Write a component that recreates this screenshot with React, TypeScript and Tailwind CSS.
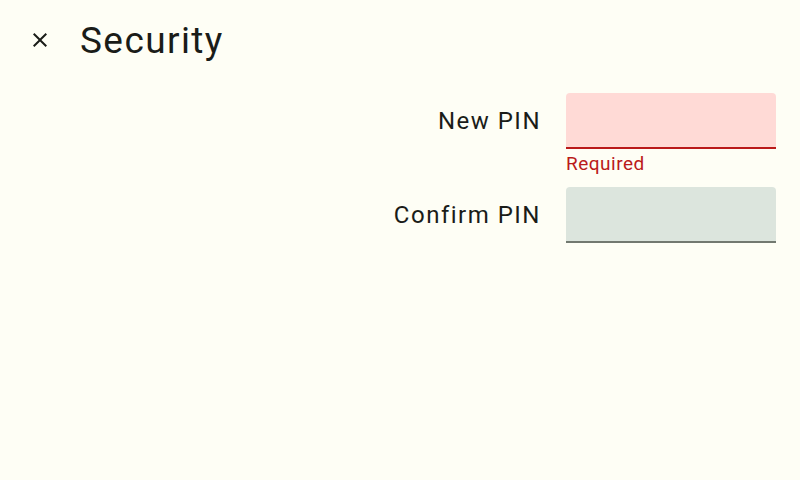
import React from "react";

function CloseIcon() {
  return (
    <svg width="24" height="24" viewBox="0 0 24 24" fill="#1a1c18">
      <path d="M19 6.41 17.59 5 12 10.59 6.41 5 5 6.41 10.59 12 5 17.59 6.41 19 12 13.41 17.59 19 19 17.59 13.41 12z" />
    </svg>
  );
}

export default function App() {
  return (
    <div
      className="w-[800px] h-[480px] bg-[#fefef5] text-[#1a1c18] flex flex-col"
      style={{ fontFamily: "Roboto, 'Noto Sans', sans-serif" }}
    >
      <header className="h-[80px] flex items-center pl-[28px]">
        <button className="w-[24px] h-[24px] flex items-center justify-center">
          <CloseIcon />
        </button>
        <h1 className="ml-[28px] text-[37px] leading-none tracking-[1.4px]">Security</h1>
      </header>

      <div className="grid grid-cols-[1fr_210px] gap-x-[25px] pr-[24px] pt-[13px]">
        <div className="flex items-center justify-end h-[56px] text-[24px] tracking-[1.5px]">New PIN</div>
        <div className="h-[56px] bg-[#ffdad6] rounded-t-[4px] border-b-2 border-[#ba1a1a]" />
        <div />
        <div className="h-[38px] pt-[3px] text-[19px] leading-[24px] tracking-[0.5px] text-[#ba1a1a]">Required</div>

        <div className="flex items-center justify-end h-[56px] text-[24px] tracking-[1.5px]">Confirm PIN</div>
        <div className="h-[56px] bg-[#dce5dd] rounded-t-[4px] border-b-2 border-[#727970]" />
      </div>
    </div>
  );
}
